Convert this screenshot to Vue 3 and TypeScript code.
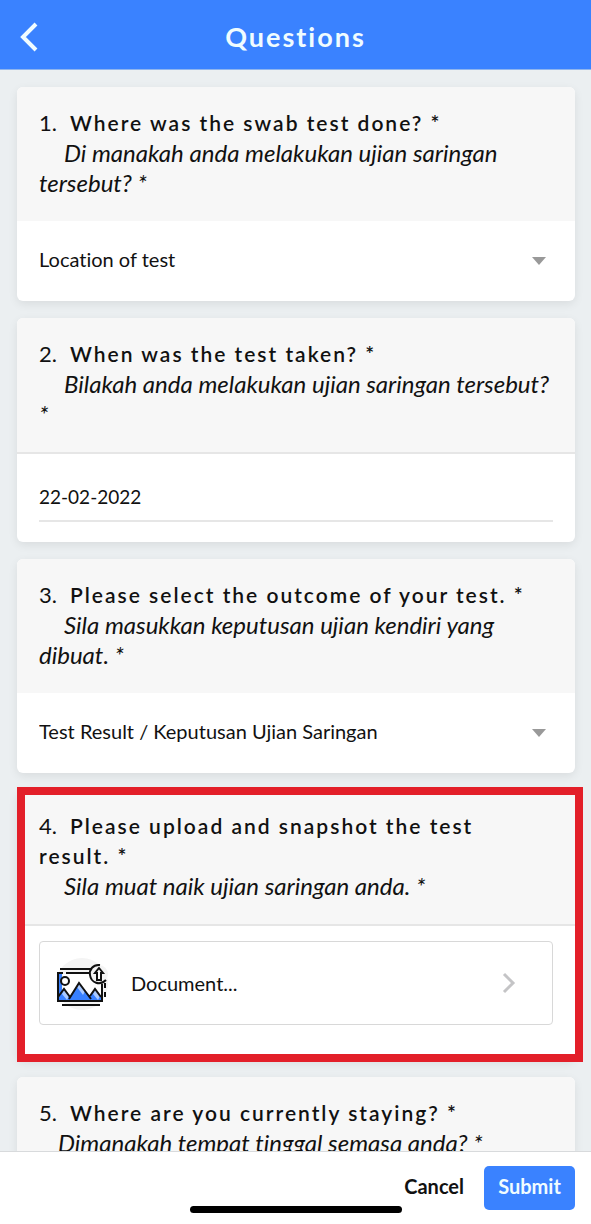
<script setup lang="ts">
import { ref } from 'vue'

interface Question {
  id: number
  title: string
  translation: string
  kind: 'select' | 'date' | 'upload'
  placeholder?: string
  highlighted?: boolean
  shortIndent?: boolean
}

const questions: Question[] = [
  { id: 1, title: 'Where was the swab test done? *', translation: 'Di manakah anda melakukan ujian saringan tersebut? *', kind: 'select', placeholder: 'Location of test' },
  { id: 2, title: 'When was the test taken? *', translation: 'Bilakah anda melakukan ujian saringan tersebut? *', kind: 'date' },
  { id: 3, title: 'Please select the outcome of your test. *', translation: 'Sila masukkan keputusan ujian kendiri yang dibuat. *', kind: 'select', placeholder: 'Test Result / Keputusan Ujian Saringan' },
  { id: 4, title: 'Please upload and snapshot the test result.\u00a0*', translation: 'Sila muat naik ujian saringan anda. *', kind: 'upload', highlighted: true },
  { id: 5, title: 'Where are you currently staying? *', translation: 'Dimanakah tempat tinggal semasa anda? *', kind: 'select', shortIndent: true },
]

const testDate = ref('22-02-2022')
</script>

<template>
  <div class="screen">
    <header class="topbar">
      <button class="back" type="button" aria-label="Back">
        <svg width="20" height="32" viewBox="0 0 20 32" fill="none" stroke="currentColor" stroke-width="4">
          <path d="M18 3 5 16l13 13" />
        </svg>
      </button>
      <h1>Questions</h1>
    </header>

    <main class="content">
      <section v-for="q in questions" :key="q.id" class="card" :class="[q.kind, { highlighted: q.highlighted }]">
        <div class="card-head">
          <label :for="`answer-${q.id}`" class="question"><span class="number">{{ q.id }}.</span>{{ q.title }}</label>
          <p class="translation" :class="{ short: q.shortIndent }">{{ q.translation }}</p>
        </div>
        <div v-if="q.kind === 'select'" class="select-row">
          <select :id="`answer-${q.id}`">
            <option>{{ q.placeholder }}</option>
          </select>
          <svg class="caret" width="14" height="8" viewBox="0 0 14 8" fill="#999"><path d="M0 0h14L7 8z" /></svg>
        </div>
        <div v-else-if="q.kind === 'date'" class="date-row">
          <input :id="`answer-${q.id}`" v-model="testDate" type="text" />
        </div>
        <div v-else class="upload-row">
          <button :id="`answer-${q.id}`" class="upload-button" type="button">
            <svg class="picture" width="56" height="56" viewBox="0 0 56 56" fill="none">
              <circle cx="27" cy="29" r="26" fill="#f4f4f4" />
              <path d="M8 19h28v4h11v23H8z" fill="#fff" />
              <path d="M2 19h5v27H2z" fill="#3880ff" />
              <path d="M3 46v-4l6-8 6 7 9-13 11 13 5-7 6 7v5z" fill="#3880ff" />
              <path d="m9 34 5 7-2 4-5-6zM24 28l6 8-2 4-6-8zM40 34l5 7-2 4-5-6z" fill="#a9c9ff" />
              <g stroke="#111" stroke-width="2">
                <path d="M5 14h31M2 18h6M11 18h24M3 18v28h44V29M7 50h38" />
                <path d="m3 42 6-8 6 8M14 44l10-16 12 16M35 41l5-7 6 8M50 28v5M50 37v5" />
                <circle cx="10" cy="26" r="4" />
              </g>
              <circle cx="44" cy="19" r="9" fill="#f4f4f4" />
              <path d="M45 10c-7-1-11 5-10 10 1 8 10 11 16 5" stroke="#111" stroke-width="2" />
              <path d="m44 13 4 5h-2v7h-4v-7h-2z" fill="#fff" stroke="#111" stroke-width="2" />
            </svg>
            <span class="upload-label">Document...</span>
            <svg width="14" height="22" viewBox="0 0 14 22" fill="none" stroke="#c4c4c6" stroke-width="3">
              <path d="m2 2 9 9-9 9" />
            </svg>
          </button>
        </div>
      </section>
    </main>

    <footer class="actions">
      <button class="cancel" type="button">Cancel</button>
      <button class="submit" type="button">Submit</button>
      <span class="home-indicator"></span>
    </footer>
  </div>
</template>

<style>
body {
  margin: 0;
}
</style>

<style scoped>
.screen {
  display: flex;
  flex-direction: column;
  height: 100vh;
  overflow: hidden;
  background: #ebeff1;
  color: #111;
  font-family: Lato, "Open Sans", sans-serif;
  font-size: 20px;
  font-variant-ligatures: none;
}
button,
input,
select {
  margin: 0;
  padding: 0;
  border: 0;
  background: none;
  color: inherit;
  font: inherit;
  font-variant-ligatures: none;
}
.topbar {
  display: grid;
  grid-template-columns: 40px 1fr 40px;
  align-items: center;
  flex: none;
  height: 70px;
  padding: 3px 18px 0;
  box-sizing: border-box;
  border-bottom: 1px solid #8fb5ee;
  background: #3a82ff;
  color: #f0fcff;
}
.back {
  display: flex;
  padding-top: 2px;
}
h1 {
  margin: 0;
  text-align: center;
  font-size: 27px;
  font-weight: 700;
  letter-spacing: 2px;
}
.content {
  display: flex;
  flex: 1;
  flex-direction: column;
  gap: 17px;
  min-height: 0;
  padding: 17px 16px 0 17px;
  overflow: hidden;
}
.card {
  position: relative;
  flex: none;
  border-radius: 6px;
  background: #fff;
  box-shadow: 0 3px 10px rgba(0, 0, 0, 0.08);
}
.card-head {
  padding: 21px 22px 23px;
  border-radius: 6px 6px 0 0;
  background: #f7f7f7;
  font-size: 22px;
  line-height: 30px;
}
.date .card-head,
.upload .card-head {
  border-bottom: 2px solid #e6e6e6;
}
.question {
  display: block;
  font-size: 21px;
  font-weight: 600;
  letter-spacing: 2px;
}
.number {
  display: inline-block;
  width: 31px;
  font-size: 22px;
  font-weight: 400;
  letter-spacing: 0;
}
.translation {
  margin: 0;
  font-size: 24px;
  font-style: italic;
  text-indent: 25px;
}
.translation.short {
  text-indent: 19px;
}
.select-row {
  display: grid;
  align-items: center;
  height: 80px;
  padding: 0 22px;
}
.select-row > * {
  grid-area: 1 / 1;
}
select {
  width: 100%;
  height: 48px;
  padding-bottom: 4px;
  appearance: none;
}
.caret {
  justify-self: end;
  margin-right: 7px;
  pointer-events: none;
}
.date-row {
  padding: 18px 22px 20px;
}
input {
  display: block;
  width: 100%;
  height: 50px;
  box-sizing: border-box;
  border-bottom: 2px solid #e6e6e6;
  font-size: 19px;
}
.upload-row {
  padding: 15px 22px 35px;
}
.upload-button {
  display: flex;
  align-items: center;
  width: 100%;
  height: 84px;
  box-sizing: border-box;
  padding: 0 36px 0 15px;
  border: 1px solid #d8d8d8;
  border-radius: 4px;
}
.picture {
  margin-right: 20px;
}
.upload-label {
  flex: 1;
  text-align: left;
}
.highlighted::after {
  position: absolute;
  inset: -3px -8px -2px 0;
  border: 8px solid #e31f29;
  content: "";
  pointer-events: none;
}
.actions {
  position: relative;
  display: flex;
  align-items: flex-start;
  justify-content: flex-end;
  flex: none;
  gap: 20px;
  height: 73px;
  padding: 14px 16px 0;
  box-sizing: border-box;
  border-top: 1px solid #d8dadc;
  background: #fff;
}
.actions button {
  height: 44px;
  font-weight: 700;
}
.cancel {
  padding-bottom: 4px;
}
.submit {
  width: 91px;
  padding-bottom: 4px;
  border-radius: 5px;
  background: #3a82ff;
  color: #f0fcff;
}
.home-indicator {
  position: absolute;
  bottom: 11px;
  left: 50%;
  width: 212px;
  height: 7px;
  border-radius: 4px;
  background: #000;
  transform: translateX(-50%);
}
</style>
